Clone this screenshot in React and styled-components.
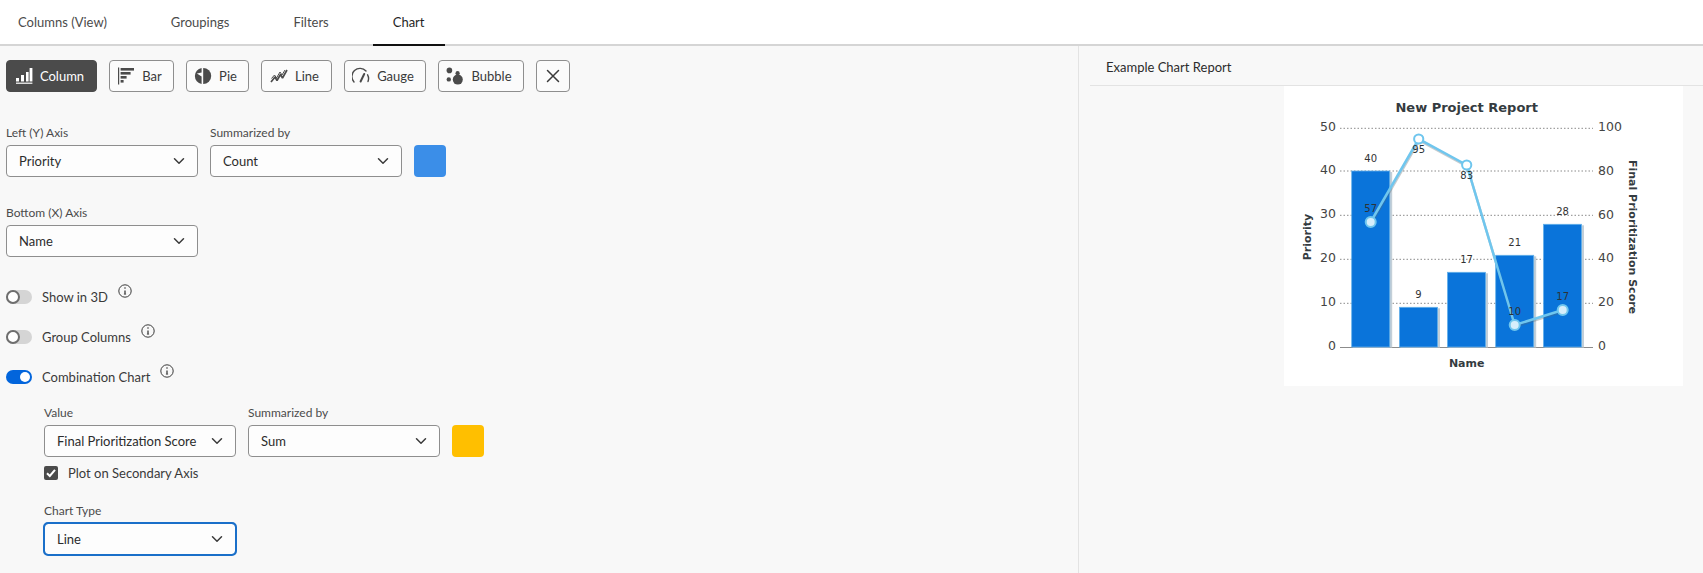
import React from 'react';
import styled, { createGlobalStyle } from 'styled-components';

const GlobalStyle = createGlobalStyle`
  html, body {
    margin: 0;
    padding: 0;
    background: #f8f8f8;
    font-family: Lato, "Open Sans", sans-serif;
  }
`;

const ColumnIcon = () => (
  <svg width="18" height="18" viewBox="0 0 18 18" fill="currentColor">
    <rect x="1" y="11" width="3" height="3.5" />
    <rect x="6" y="8" width="3" height="6.5" />
    <rect x="11" y="5" width="2.6" height="9.5" />
    <rect x="14.6" y="1" width="2.8" height="13.5" />
    <rect x="1" y="15.6" width="16.4" height="1.2" />
  </svg>
);

const BarIcon = () => (
  <svg width="18" height="18" viewBox="0 0 18 18" fill="currentColor">
    <rect x="1" y="0.5" width="1.2" height="17" />
    <rect x="3.6" y="1" width="13.4" height="2.6" />
    <rect x="3.6" y="5" width="10" height="2.6" />
    <rect x="3.6" y="9" width="6" height="2.6" />
    <rect x="3.6" y="13" width="3" height="2.6" />
  </svg>
);

const PieIcon = () => (
  <svg width="18" height="18" viewBox="0 0 18 18" fill="currentColor">
    <path d="M7.6 1.1A8 8 0 0 0 7.6 16.9L7.6 9.6L2.9 6.4L7.6 5.6Z" />
    <path d="M9.2 1A8 8 0 0 1 9.2 17Z" />
  </svg>
);

const LineIcon = () => (
  <svg width="18" height="18" viewBox="0 0 18 18" fill="none" stroke="currentColor" strokeWidth="1.7" strokeLinejoin="bevel">
    <path d="M1 15L5 10L7 13.5L10.5 7.5L12.5 11L17 3" />
    <path d="M1.5 11.5L4.5 8L6.5 11L10 5L12 8L15 3" strokeWidth="1" />
  </svg>
);

const GaugeIcon = () => (
  <svg width="18" height="18" viewBox="0 0 18 18" fill="none" stroke="currentColor" strokeWidth="1.4" strokeLinecap="round">
    <path d="M2 15A8 8 0 0 1 14 4" />
    <path d="M16 14.5A8 8 0 0 0 15.6 7.8" />
    <path d="M8.6 14.5L12.2 7" strokeWidth="2" />
  </svg>
);

const BubbleIcon = () => (
  <svg width="18" height="18" viewBox="0 0 18 18" fill="currentColor">
    <circle cx="3.4" cy="3.4" r="2.8" />
    <circle cx="2.8" cy="12.4" r="2.2" />
    <circle cx="11.6" cy="6.2" r="2.1" />
    <circle cx="11.8" cy="12.6" r="5" />
  </svg>
);

const Chevron = () => (
  <svg width="12" height="12" viewBox="0 0 12 12" fill="none" stroke="#3a3a3a" strokeWidth="1.5" strokeLinecap="round" strokeLinejoin="round">
    <path d="M1.5 3.8L6 8.2L10.5 3.8" />
  </svg>
);

const InfoIcon = () => (
  <InfoWrap viewBox="0 0 14 14" fill="none" stroke="#3a3a3a">
    <circle cx="7" cy="7" r="6.2" strokeWidth="1" />
    <path d="M7 6.4V10" strokeWidth="1.3" />
    <path d="M5.9 10.2H8.1" strokeWidth="0.8" />
    <circle cx="7" cy="4" r="0.8" fill="#3a3a3a" stroke="none" />
  </InfoWrap>
);

const tabs = [
  { label: 'Columns (View)' },
  { label: 'Groupings' },
  { label: 'Filters' },
  { label: 'Chart', active: true },
];

const chartTypes = [
  { label: 'Column', width: 91, icon: <ColumnIcon />, active: true },
  { label: 'Bar', width: 65, icon: <BarIcon /> },
  { label: 'Pie', width: 63, icon: <PieIcon /> },
  { label: 'Line', width: 71, icon: <LineIcon /> },
  { label: 'Gauge', width: 82, icon: <GaugeIcon /> },
  { label: 'Bubble', width: 86, icon: <BubbleIcon /> },
];

const Select = ({ value, focused }) => (
  <SelectBox $focused={focused}>
    <span>{value}</span>
    <Chevron />
  </SelectBox>
);

const Field = ({ label, value, focused }) => (
  <FieldWrap>
    <FieldLabel>{label}</FieldLabel>
    <Select value={value} focused={focused} />
  </FieldWrap>
);

const ToggleRow = ({ label, on }) => (
  <ToggleLine>
    <Track $on={on}>
      <Knob $on={on} />
    </Track>
    <ToggleLabel>{label}</ToggleLabel>
    <InfoIcon />
  </ToggleLine>
);

const gridLines = [42.3, 85, 129.3, 173.3, 217.3];
const leftTicks = [
  ['50', 45],
  ['40', 88],
  ['30', 132],
  ['20', 176],
  ['10', 220],
  ['0', 264],
];
const rightTicks = ['100', '80', '60', '40', '20', '0'];
const bars = [
  { x: 67.7, top: 85, label: '40', labelY: 76 },
  { x: 115.5, top: 221.3, label: '9', labelY: 212 },
  { x: 163.5, top: 186.3, label: '17', labelY: 177 },
  { x: 211.7, top: 169.3, label: '21', labelY: 160 },
  { x: 259.5, top: 138.3, label: '28', labelY: 129 },
];
const points = [
  { x: 86.7, y: 136, label: '57', labelY: 126, filled: true },
  { x: 134.7, y: 53, label: '95', labelY: 67 },
  { x: 182.7, y: 79, label: '83', labelY: 93 },
  { x: 230.7, y: 239, label: '10', labelY: 229, filled: true },
  { x: 278.7, y: 224, label: '17', labelY: 214, filled: true },
];

const ReportChart = () => (
  <svg width="399" height="300" viewBox="0 0 399 300" fontFamily="'DejaVu Sans', sans-serif">
    <text x="182.7" y="26" textAnchor="middle" fontSize="13" fontWeight="700" fill="#343b40">New Project Report</text>
    {gridLines.map((y) => (
      <line key={y} x1="56" x2="309" y1={y} y2={y} stroke="#8a8a8a" strokeWidth="1" strokeDasharray="1.5 2" />
    ))}
    <line x1="56" x2="309" y1="261.5" y2="261.5" stroke="#8c8c8c" strokeWidth="1" />
    {leftTicks.map(([t, y]) => (
      <text key={t} x="52" y={y} textAnchor="end" fontSize="12.5" fill="#444">{t}</text>
    ))}
    {rightTicks.map((t, i) => (
      <text key={t} x="314" y={45 + i * 43.8} fontSize="12.5" fill="#444">{t}</text>
    ))}
    <text transform="translate(27 151) rotate(-90)" textAnchor="middle" fontSize="11" fontWeight="700" fill="#343b40">Priority</text>
    <text transform="translate(345 151) rotate(90)" textAnchor="middle" fontSize="11" fontWeight="700" fill="#343b40">Final Prioritization Score</text>
    <text x="182.7" y="281" textAnchor="middle" fontSize="11" fontWeight="700" fill="#343b40">Name</text>
    {bars.map((b) => (
      <g key={b.x}>
        <rect x={b.x + 1} y={b.top + 1} width="39.5" height={260.5 - b.top} fill="#c3cfd8" />
        <rect x={b.x} y={b.top} width="38" height={261 - b.top} fill="#0a74da" stroke="#62b0ea" strokeWidth="0.8" />
        <text x={b.x + 19} y={b.labelY} textAnchor="middle" fontSize="10" fill="#333">{b.label}</text>
      </g>
    ))}
    <polyline
      points={points.map((p) => `${p.x + 0.5},${p.y + 1.5}`).join(' ')}
      fill="none"
      stroke="#5a6a75"
      strokeOpacity="0.35"
      strokeWidth="2.5"
    />
    <polyline
      points={points.map((p) => `${p.x},${p.y}`).join(' ')}
      fill="none"
      stroke="#6fc6ee"
      strokeWidth="2.5"
    />
    {points.map((p) => (
      <g key={p.x}>
        <circle cx={p.x} cy={p.y} r={p.filled ? 5 : 4.6} fill={p.filled ? '#d6eefb' : '#ffffff'} stroke="#6fc6ee" strokeWidth="2" />
        <text x={p.x} y={p.labelY} textAnchor="middle" fontSize="10" fill="#2c3337">{p.label}</text>
      </g>
    ))}
  </svg>
);

const App = () => (
  <>
    <GlobalStyle />
    <Page>
      <TabBar>
        {tabs.map((t) => (
          <Tab key={t.label} $active={t.active}>{t.label}</Tab>
        ))}
      </TabBar>
      <Body>
        <LeftPanel>
          <Toolbar>
            {chartTypes.map((c) => (
              <TypeButton key={c.label} $active={c.active} $w={c.width}>
                {c.icon}
                {c.label}
              </TypeButton>
            ))}
            <CloseButton>
              <svg width="14" height="14" viewBox="0 0 14 14" stroke="#3a3a3a" strokeWidth="1.5" strokeLinecap="round">
                <path d="M1.5 1.5L12.5 12.5M12.5 1.5L1.5 12.5" />
              </svg>
            </CloseButton>
          </Toolbar>

          <FieldRow $top={33}>
            <Field label="Left (Y) Axis" value="Priority" />
            <Field label="Summarized by" value="Count" />
            <Swatch $color="#3b8ee8" />
          </FieldRow>

          <FieldRow $top={28}>
            <Field label="Bottom (X) Axis" value="Name" />
          </FieldRow>

          <Toggles>
            <ToggleRow label="Show in 3D" />
            <ToggleRow label="Group Columns" />
            <ToggleRow label="Combination Chart" on />
          </Toggles>

          <Nested>
            <FieldRow $top={21}>
              <Field label="Value" value="Final Prioritization Score" />
              <Field label="Summarized by" value="Sum" />
              <Swatch $color="#ffbf00" />
            </FieldRow>
            <CheckRow>
              <CheckBox>
                <svg width="10" height="10" viewBox="0 0 10 10" fill="none" stroke="#fff" strokeWidth="2">
                  <path d="M1 5.2L3.8 8L9 1.8" />
                </svg>
              </CheckBox>
              Plot on Secondary Axis
            </CheckRow>
            <FieldRow $top={23}>
              <Field label="Chart Type" value="Line" focused />
            </FieldRow>
          </Nested>
        </LeftPanel>

        <RightPanel>
          <PanelTitle>Example Chart Report</PanelTitle>
          <ChartCard>
            <ReportChart />
          </ChartCard>
        </RightPanel>
      </Body>
    </Page>
  </>
);

export default App;

const Page = styled.div`
  width: 1703px;
  height: 573px;
  overflow: hidden;
  background: #f8f8f8;
  color: #2c2c2c;
`;

const TabBar = styled.div`
  display: flex;
  gap: 24px;
  height: 44px;
  background: #fff;
  border-bottom: 2px solid #d5d5d5;
`;

const Tab = styled.div`
  display: flex;
  align-items: center;
  padding: 0 20px;
  font-size: 13px;
  color: ${({ $active }) => ($active ? '#1f1f1f' : '#4b4b4b')};
  border-bottom: 2px solid ${({ $active }) => ($active ? '#111' : 'transparent')};
  height: 44px;

  &:first-child {
    margin-left: -2px;
  }
`;

const Body = styled.div`
  display: flex;
  height: 527px;
`;

const LeftPanel = styled.div`
  width: 1079px;
  box-sizing: border-box;
  flex-shrink: 0;
  padding: 14px 0 0 6px;
  border-right: 1px solid #e3e3e3;
`;

const Toolbar = styled.div`
  display: flex;
  gap: 12px;
`;

const TypeButton = styled.div`
  width: ${({ $w }) => $w}px;
  height: 32px;
  box-sizing: border-box;
  display: flex;
  align-items: center;
  justify-content: center;
  gap: 7px;
  padding-right: 4px;
  font-size: 13px;
  border-radius: 4px;
  border: 1px solid ${({ $active }) => ($active ? '#4b4b4b' : '#8e8e8e')};
  background: ${({ $active }) => ($active ? '#4b4b4b' : '#fbfbfb')};
  color: ${({ $active }) => ($active ? '#fff' : '#3a3a3a')};

  svg {
    color: ${({ $active }) => ($active ? '#fff' : '#4b4b4b')};
    flex-shrink: 0;
  }
`;

const CloseButton = styled.div`
  width: 34px;
  height: 32px;
  box-sizing: border-box;
  display: flex;
  align-items: center;
  justify-content: center;
  border-radius: 4px;
  border: 1px solid #8e8e8e;
  background: #fbfbfb;
`;

const FieldRow = styled.div`
  display: flex;
  align-items: flex-end;
  gap: 12px;
  margin-top: ${({ $top }) => $top}px;
`;

const FieldWrap = styled.div`
  width: 192px;
`;

const FieldLabel = styled.div`
  height: 15px;
  line-height: 15px;
  margin-bottom: 5px;
  font-size: 12px;
  color: #4b4b4b;
`;

const SelectBox = styled.div`
  height: 32px;
  box-sizing: border-box;
  display: flex;
  align-items: center;
  justify-content: space-between;
  padding: 0 12px;
  background: #fdfdfd;
  font-size: 13px;
  color: #2c2c2c;
  border-radius: 4px;
  border: 1px solid ${({ $focused }) => ($focused ? '#1a6fc9' : '#8e8e8e')};
  ${({ $focused }) => $focused && 'outline: 2px solid #1a6fc9; outline-offset: -1px;'}
`;

const Swatch = styled.div`
  width: 32px;
  height: 32px;
  border-radius: 4px;
  background: ${({ $color }) => $color};
`;

const Toggles = styled.div`
  display: flex;
  flex-direction: column;
  gap: 26px;
  margin-top: 33px;
`;

const ToggleLine = styled.div`
  display: flex;
  align-items: center;
  height: 14px;
`;

const Track = styled.div`
  width: 26px;
  height: 14px;
  border-radius: 7px;
  display: flex;
  align-items: center;
  box-sizing: border-box;
  background: ${({ $on }) => ($on ? '#0265dc' : '#d5d5d5')};
  justify-content: ${({ $on }) => ($on ? 'flex-end' : 'flex-start')};
  padding: ${({ $on }) => ($on ? '0 2px' : '0')};
`;

const Knob = styled.div`
  box-sizing: border-box;
  border-radius: 50%;
  background: #fff;
  width: ${({ $on }) => ($on ? '10px' : '14px')};
  height: ${({ $on }) => ($on ? '10px' : '14px')};
  border: ${({ $on }) => ($on ? 'none' : '2px solid #6e6e6e')};
`;

const ToggleLabel = styled.span`
  margin-left: 10px;
  font-size: 13px;
  color: #3a3a3a;
`;

const InfoWrap = styled.svg`
  width: 14px;
  height: 14px;
  margin: -12px 0 0 10px;
`;

const Nested = styled.div`
  padding-left: 38px;
`;

const CheckRow = styled.div`
  display: flex;
  align-items: center;
  gap: 10px;
  margin-top: 9px;
  height: 14px;
  font-size: 13px;
  color: #3a3a3a;
`;

const CheckBox = styled.div`
  width: 14px;
  height: 14px;
  border-radius: 2px;
  display: flex;
  align-items: center;
  justify-content: center;
  background: #4b4b4b;
`;

const RightPanel = styled.div`
  flex: 1;
  padding-left: 11px;
`;

const PanelTitle = styled.div`
  height: 39px;
  line-height: 42px;
  padding-left: 16px;
  font-size: 13px;
  color: #2c2c2c;
  border-bottom: 1px solid #e3e3e3;
`;

const ChartCard = styled.div`
  width: 399px;
  height: 300px;
  margin-left: 194px;
  background: #fff;
`;
